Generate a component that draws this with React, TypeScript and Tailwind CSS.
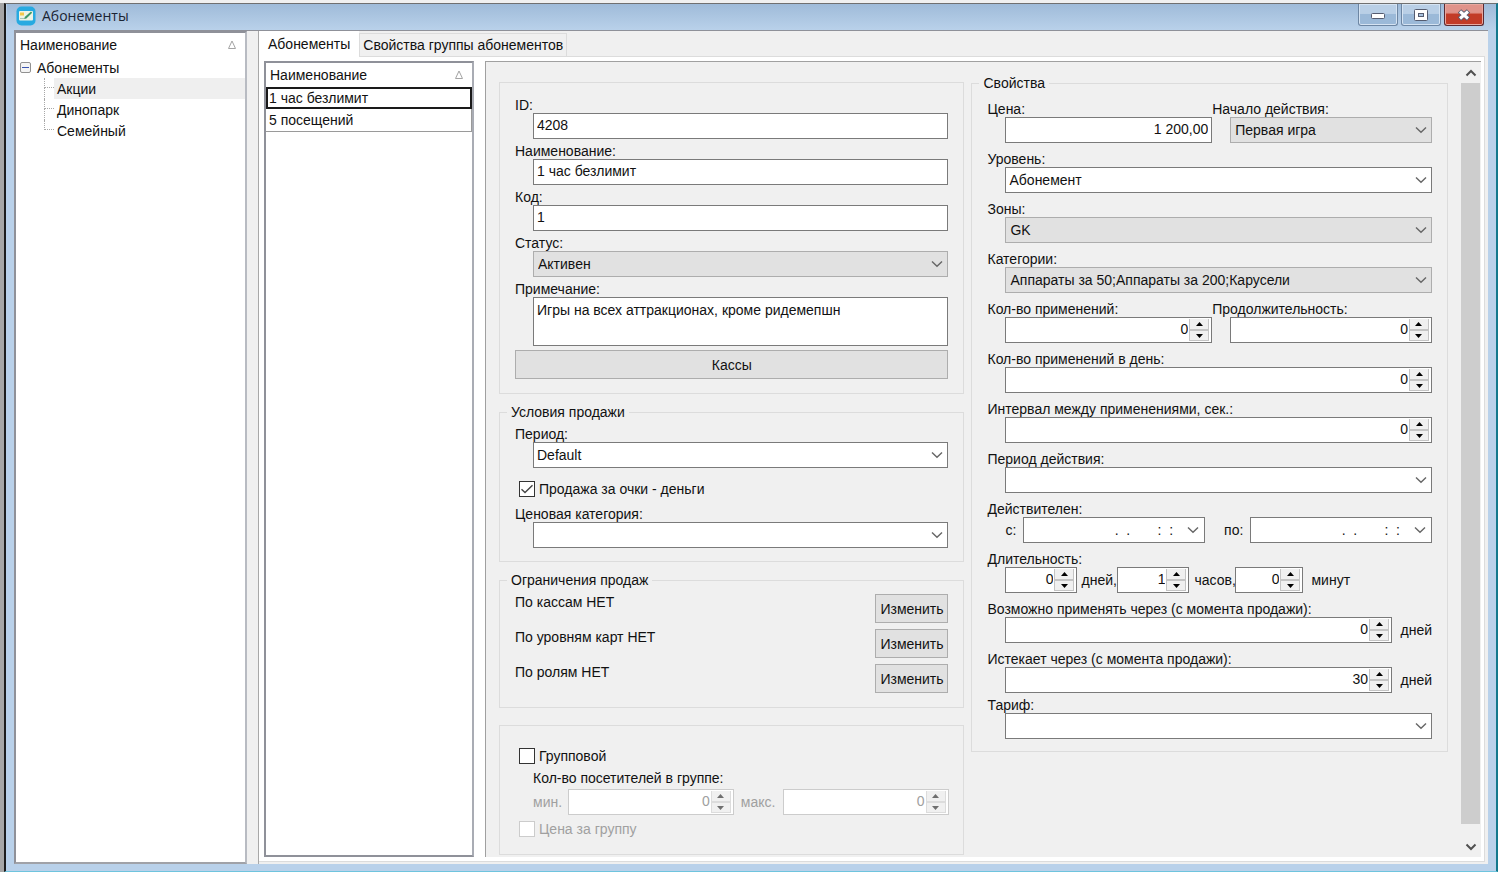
import React, { ReactNode, useId } from "react";

function cx(...parts: (string | false | undefined)[]) {
  return parts.filter(Boolean).join(" ");
}

function Chevron({ className }: { className?: string }) {
  return (
    <svg viewBox="0 0 12 8" fill="none" stroke="#666666" strokeWidth="1.4" className={cx("h-2 w-3", className)} aria-hidden="true">
      <path d="M1 1.4 6 6.2 11 1.4" />
    </svg>
  );
}

function SortMark() {
  return (
    <svg viewBox="0 0 10 10" fill="none" stroke="#a4a4a4" className="size-[10px]" aria-hidden="true">
      <path d="M5 1 8.5 8.5H1.5Z" />
    </svg>
  );
}

function Field({ label, id, children, className }: { label: string; id: string; children: ReactNode; className?: string }) {
  return (
    <div className={cx("flex flex-col", className)}>
      <label htmlFor={id} className="leading-4 whitespace-nowrap">
        {label}
      </label>
      <div className="pl-[18px]">{children}</div>
    </div>
  );
}

function TextField({ label, value, right }: { label: string; value: string; right?: boolean }) {
  const id = useId();
  return (
    <Field label={label} id={id}>
      <input
        id={id}
        defaultValue={value}
        className={cx("block h-[26px] w-full border border-[#7a7a7a] bg-white px-[3px] pb-[2px] outline-none", right && "text-right")}
      />
    </Field>
  );
}

function SelectField({ label, value, gray, className }: { label: string; value: string; gray?: boolean; className?: string }) {
  const id = useId();
  return (
    <Field label={label} id={id} className={className}>
      <div className="relative">
        <select
          id={id}
          defaultValue={value}
          className={cx(
            "block h-[26px] w-full appearance-none border pr-6 outline-none",
            gray ? "border-[#adadad] bg-[#e1e1e1] pl-1" : "border-[#7a7a7a] bg-white pl-[3px]",
          )}
        >
          <option value={value}>{value}</option>
        </select>
        <Chevron className="pointer-events-none absolute top-[9px] right-[5px]" />
      </div>
    </Field>
  );
}

function Spinner({ id, value, label, disabled, className }: { id?: string; value: string; label?: string; disabled?: boolean; className?: string }) {
  const fill = disabled ? "#6f6f6f" : "#000";
  const step = "flex h-[11px] w-5 items-center justify-center border bg-[#f0f0f0]";
  const edge = disabled ? "border-[#dcdcdc]" : "border-[#c4c4c4]";
  return (
    <div
      className={cx(
        "flex h-[26px] min-w-0 items-center border bg-white pr-[2px]",
        disabled ? "border-[#cccccc]" : "border-[#7a7a7a]",
        className,
      )}
    >
      <input
        id={id}
        aria-label={label}
        disabled={disabled}
        defaultValue={value}
        className={cx("h-full w-0 min-w-0 flex-1 bg-transparent pr-px pb-[2px] text-right outline-none", disabled && "text-[#a0a0a0]")}
      />
      <div className="flex flex-col">
        <button type="button" disabled={disabled} aria-label="Увеличить" className={cx(step, edge, "border-t-0")}>
          <svg viewBox="0 0 7 4" className="h-1 w-[7px]" fill={fill}>
            <path d="M3.5 0 7 4H0Z" />
          </svg>
        </button>
        <button type="button" disabled={disabled} aria-label="Уменьшить" className={cx(step, edge)}>
          <svg viewBox="0 0 7 4" className="h-1 w-[7px]" fill={fill}>
            <path d="M3.5 4 7 0H0Z" />
          </svg>
        </button>
      </div>
    </div>
  );
}

function SpinnerField({ label, value, suffix }: { label: string; value: string; suffix?: string }) {
  const id = useId();
  return (
    <Field label={label} id={id}>
      <div className="flex items-center">
        <Spinner id={id} value={value} className="flex-1" />
        {suffix && <span className="w-10 text-right">{suffix}</span>}
      </div>
    </Field>
  );
}

function DateBox({ label }: { label: string }) {
  const id = useId();
  return (
    <>
      <label htmlFor={id}>{label}</label>
      <div className="flex h-[26px] min-w-0 flex-1 items-center border border-[#7a7a7a] bg-white">
        <input id={id} defaultValue=".  .       :  :" className="h-full w-0 min-w-0 flex-1 bg-transparent pr-[14px] text-right outline-none" />
        <button type="button" aria-label="Открыть календарь" className="pr-[5px]">
          <Chevron />
        </button>
      </div>
    </>
  );
}

function Check({ label, checked, disabled }: { label: string; checked?: boolean; disabled?: boolean }) {
  return (
    <label className={cx("flex h-4 items-center gap-1 pl-1", disabled && "text-[#a0a0a0]")}>
      <span className="relative flex size-4">
        <input
          type="checkbox"
          defaultChecked={checked}
          disabled={disabled}
          className={cx("peer size-4 appearance-none border bg-white", disabled ? "border-[#cccccc]" : "border-[#333333]")}
        />
        <svg
          viewBox="0 0 16 16"
          fill="none"
          stroke="#444"
          strokeWidth="1.4"
          className="pointer-events-none absolute inset-0 hidden size-4 peer-checked:block"
        >
          <path d="M2.5 8.2 6 11.6 13.5 4.2" />
        </svg>
      </span>
      {label}
    </label>
  );
}

function Group({ legend, className, children }: { legend?: string; className?: string; children: ReactNode }) {
  return (
    <fieldset className={cx("min-w-0 border border-[#dcdcdc] px-[15px]", className)}>
      {legend && <legend className="-ml-2 px-1 leading-4">{legend}</legend>}
      {children}
    </fieldset>
  );
}

function PushButton({ children, className }: { children: ReactNode; className?: string }) {
  return (
    <button type="button" className={cx("h-[29px] border border-[#adadad] bg-[#e1e1e1]", className)}>
      {children}
    </button>
  );
}

function TitleBar() {
  const box = "flex h-[22px] items-center justify-center rounded-b-[3px] border border-t-0";
  const plain = "w-10 border-[#6d86a3] bg-linear-to-b from-[#b9cfe6] from-45% to-[#9bb9d8] to-50% shadow-[inset_0_0_0_1px_#d5e3f2]";
  return (
    <header className="flex h-[26px] shrink-0 items-start justify-between bg-linear-to-b from-[#9fbbd9] to-[#b9d1ea] pr-3 pl-[9px]">
      <div className="flex h-6 items-center gap-[6px]">
        <svg viewBox="0 0 20 20" className="size-5" aria-hidden="true">
          <rect x="0.5" y="0.5" width="19" height="19" rx="5" fill="#27aae1" />
          <rect x="3" y="5" width="14" height="9.5" rx="1" fill="#eef4e6" />
          <rect x="4" y="6.5" width="4" height="3" fill="#f4c94a" />
          <path d="M8 13 9 10.8 15 5.4 16.2 6.8 10.4 12.4Z" fill="#3f9a6b" />
          <path d="M4 12.5h4" stroke="#a9c7b5" />
        </svg>
        <h1 className="font-['Open_Sans','Noto_Sans',sans-serif] text-sm text-[#1b2433]">Абонементы</h1>
      </div>
      <div className="flex gap-[3px]">
        <button type="button" aria-label="Свернуть" className={cx(box, plain)}>
          <svg viewBox="0 0 14 6" className="mt-[3px] h-[6px] w-[14px]">
            <rect x="0.5" y="0.5" width="13" height="5" rx="1" fill="#fff" stroke="#555c70" />
          </svg>
        </button>
        <button type="button" aria-label="Развернуть" className={cx(box, plain)}>
          <svg viewBox="0 0 14 12" className="h-3 w-[14px]">
            <rect x="0.5" y="0.5" width="13" height="11" rx="1" fill="#fff" stroke="#555c70" />
            <rect x="4.5" y="4.5" width="5" height="3" fill="#a9c3df" stroke="#555c70" />
          </svg>
        </button>
        <button
          type="button"
          aria-label="Закрыть"
          className={cx(box, "w-10 border-[#5b2a32] bg-linear-to-b from-[#e0938a] from-40% to-[#c23b27] to-50% shadow-[inset_0_0_0_1px_#e8a89f]")}
        >
          <svg viewBox="0 0 14 12" className="h-3 w-[14px]">
            <path d="M2.5 2 11.5 10M11.5 2 2.5 10" stroke="#555c70" strokeWidth="5" />
            <path d="M3 2.5 11 9.5M11 2.5 3 9.5" stroke="#fff" strokeWidth="3" />
          </svg>
        </button>
      </div>
    </header>
  );
}

function Tree() {
  const leaves = ["Акции", "Динопарк", "Семейный"];
  return (
    <nav className="w-[233px] shrink-0 border-2 border-[#8f9199] border-r-[#b8bbc2] border-b-[#a0a2a8] bg-white">
      <div className="flex h-6 items-center justify-between pr-2 pl-1">
        <span>Наименование</span>
        <SortMark />
      </div>
      <div className="flex h-[21px] items-center gap-[6px] pl-1">
        <button type="button" aria-label="Свернуть ветку" className="flex size-[11px] items-center justify-center rounded-[2px] border border-[#919191] bg-[#f4f4f4]">
          <span className="h-px w-[7px] bg-[#3b55b0]" />
        </button>
        <span>Абонементы</span>
      </div>
      <ul>
        {leaves.map((name, i) => (
          <li key={name} className="flex h-[21px] pl-7">
            <span className="flex w-[10px] flex-col">
              <span className="h-[10px] border-b border-l border-dotted border-[#a8a8a8]" />
              {i < leaves.length - 1 && <span className="flex-1 border-l border-dotted border-[#a8a8a8]" />}
            </span>
            <a href="#tree" className={cx("flex flex-1 items-center pl-[3px]", i === 0 && "bg-[#efefef]")}>
              {name}
            </a>
          </li>
        ))}
      </ul>
    </nav>
  );
}

function List() {
  return (
    <div className="w-[210px] shrink-0 border-2 border-[#8f9199] border-r-[#a9acb4] bg-white">
      <table className="w-full border-collapse text-left">
        <thead>
          <tr>
            <th className="p-0 font-normal">
              <div className="flex h-6 items-center justify-between pr-2 pl-1">
                Наименование
                <SortMark />
              </div>
            </th>
          </tr>
        </thead>
        <tbody>
          <tr>
            <td className="p-0">
              <div className="flex h-[22px] items-center border-2 border-[#1a1a1a] pl-px">1 час безлимит</div>
            </td>
          </tr>
          <tr>
            <td className="p-0">
              <div className="flex h-[23px] items-center border-r border-b border-[#9a9a9a] pl-[3px]">5 посещений</div>
            </td>
          </tr>
        </tbody>
      </table>
    </div>
  );
}

function MainGroup() {
  const noteId = useId();
  return (
    <Group className="mt-[7px] flex flex-col gap-1 pt-[14px] pb-[14px]">
      <TextField label="ID:" value="4208" />
      <TextField label="Наименование:" value="1 час безлимит" />
      <TextField label="Код:" value="1" />
      <SelectField label="Статус:" value="Активен" gray />
      <Field label="Примечание:" id={noteId}>
        <textarea
          id={noteId}
          defaultValue="Игры на всех аттракционах, кроме ридемепшн"
          className="block h-[49px] w-full resize-none border border-[#7a7a7a] bg-white px-[3px] py-1 leading-4 outline-none"
        />
      </Field>
      <PushButton>Кассы</PushButton>
    </Group>
  );
}

function SaleTerms() {
  return (
    <Group legend="Условия продажи" className="pt-[6px] pb-[13px]">
      <SelectField label="Период:" value="Default" />
      <div className="pt-[13px] pb-[9px]">
        <Check label="Продажа за очки - деньги" checked />
      </div>
      <SelectField label="Ценовая категория:" value="" />
    </Group>
  );
}

function SaleLimits() {
  return (
    <Group legend="Ограничения продаж" className="pt-[6px] pb-[14px]">
      <div className="flex flex-col gap-[6px]">
        {["По кассам НЕТ", "По уровням карт НЕТ", "По ролям НЕТ"].map((text) => (
          <div key={text} className="flex items-start justify-between">
            <span className="leading-4">{text}</span>
            <PushButton className="w-[73px]">Изменить</PushButton>
          </div>
        ))}
      </div>
    </Group>
  );
}

function GroupTicket() {
  return (
    <Group className="mt-[7px] pt-[22px] pb-[17px]">
      <Check label="Групповой" />
      <div className="pt-[6px] pl-[18px]">
        <div className="leading-4">Кол-во посетителей в группе:</div>
        <div className="mt-[3px] mb-[6px] flex items-center text-[#a0a0a0]">
          <span className="w-[35px]">мин.</span>
          <Spinner label="мин." value="0" disabled className="flex-1" />
          <span className="w-[49px] pl-[7px]">макс.</span>
          <Spinner label="макс." value="0" disabled className="flex-1" />
        </div>
      </div>
      <Check label="Цена за группу" disabled />
    </Group>
  );
}

function Properties() {
  return (
    <Group legend="Свойства" className="self-start pt-[10px] pb-3">
      <div className="flex flex-col gap-2">
        <div className="grid grid-cols-[225fr_220fr]">
          <TextField label="Цена:" value="1 200,00" right />
          <SelectField label="Начало действия:" value="Первая игра" gray />
        </div>
        <SelectField label="Уровень:" value="Абонемент" />
        <SelectField label="Зоны:" value="GK" gray />
        <SelectField label="Категории:" value="Аппараты за 50;Аппараты за 200;Карусели" gray />
        <div className="grid grid-cols-[225fr_220fr]">
          <SpinnerField label="Кол-во применений:" value="0" />
          <SpinnerField label="Продолжительность:" value="0" />
        </div>
        <SpinnerField label="Кол-во применений в день:" value="0" />
        <SpinnerField label="Интервал между применениями, сек.:" value="0" />
        <SelectField label="Период действия:" value="" />
        <div>
          <div className="leading-4">Действителен:</div>
          <div className="flex items-center gap-[7px] pl-[18px]">
            <DateBox label="с:" />
            <span className="w-[5px]" />
            <DateBox label="по:" />
          </div>
        </div>
        <div>
          <div className="leading-4">Длительность:</div>
          <div className="flex items-center pl-[18px]">
            <Spinner label="дней" value="0" className="w-[72px]" />
            <span className="w-10 pl-1">дней,</span>
            <Spinner label="часов" value="1" className="w-[72px]" />
            <span className="w-[46px] pl-[5px]">часов,</span>
            <Spinner label="минут" value="0" className="w-[68px]" />
            <span className="pl-2">минут</span>
          </div>
        </div>
        <SpinnerField label="Возможно применять через (с момента продажи):" value="0" suffix="дней" />
        <div className="flex flex-col gap-1">
          <SpinnerField label="Истекает через (с момента продажи):" value="30" suffix="дней" />
          <SelectField label="Тариф:" value="" />
        </div>
      </div>
    </Group>
  );
}

function ScrollBar() {
  return (
    <div className="flex w-5 shrink-0 flex-col bg-[#f0f0f0] pr-px">
      <button type="button" aria-label="Вверх" className="flex h-[21px] items-center justify-center">
        <svg viewBox="0 0 12 8" fill="none" stroke="#505050" strokeWidth="2" className="h-2 w-3">
          <path d="M1.5 6.5 6 2 10.5 6.5" />
        </svg>
      </button>
      <div className="flex-1 bg-[#cdcdcd]" />
      <div className="h-3" />
      <button type="button" aria-label="Вниз" className="flex h-[21px] items-center justify-center">
        <svg viewBox="0 0 12 8" fill="none" stroke="#505050" strokeWidth="2" className="h-2 w-3">
          <path d="M1.5 1.5 6 6 10.5 1.5" />
        </svg>
      </button>
    </div>
  );
}

export default function App() {
  return (
    <div className="flex h-screen flex-col bg-[#a6a6a6] pl-1 font-['Liberation_Sans',Arial,sans-serif] text-sm text-[#111111]">
      <div className="-ml-1 h-[3px] shrink-0 bg-[#f0f0f0]" />
      <div className="flex min-h-0 flex-1 flex-col border-t border-r-2 border-b border-l-2 border-t-[#707070] border-r-[#12788c] border-b-[#6fc4de] border-l-[#1c1c1c] bg-[#b9d1ea] pl-px">
        <TitleBar />
        <div className="flex min-h-0 flex-1 pr-2 pb-[7px] pl-[7px]">
          <div className="flex min-h-0 min-w-0 flex-1 gap-[11px] border-t border-[#8f9199] bg-[#f0f0f0]">
            <Tree />
            <div className="flex min-w-0 flex-1 flex-col border-l border-[#a8a8a8] pr-[3px] pb-[2px]">
              <div role="tablist" className="flex h-[26px] shrink-0 items-end border-b border-[#dcdcdc]">
                <button type="button" role="tab" aria-selected="true" className="-mb-px h-[26px] bg-white px-[9px]">
                  Абонементы
                </button>
                <button type="button" role="tab" aria-selected="false" className="h-[23px] border border-b-0 border-[#dcdcdc] px-[3px]">
                  Свойства группы абонементов
                </button>
              </div>
              <div className="flex min-h-0 flex-1 gap-[11px] border-r border-b border-[#dcdcdc] bg-white pt-1 pr-[3px] pb-1 pl-[5px]">
                <List />
                <div className="flex min-w-0 flex-1 border-t border-l border-[#a0a0a0] bg-[#f0f0f0]">
                  <div className="grid min-w-0 flex-1 grid-cols-[465fr_476fr] gap-[7px] overflow-y-auto pt-[13px] pr-[13px] pl-[13px] [scrollbar-width:none]">
                    <div className="flex min-w-0 flex-col gap-[10px]">
                      <MainGroup />
                      <SaleTerms />
                      <SaleLimits />
                      <GroupTicket />
                    </div>
                    <Properties />
                  </div>
                  <ScrollBar />
                </div>
              </div>
            </div>
          </div>
        </div>
      </div>
    </div>
  );
}
